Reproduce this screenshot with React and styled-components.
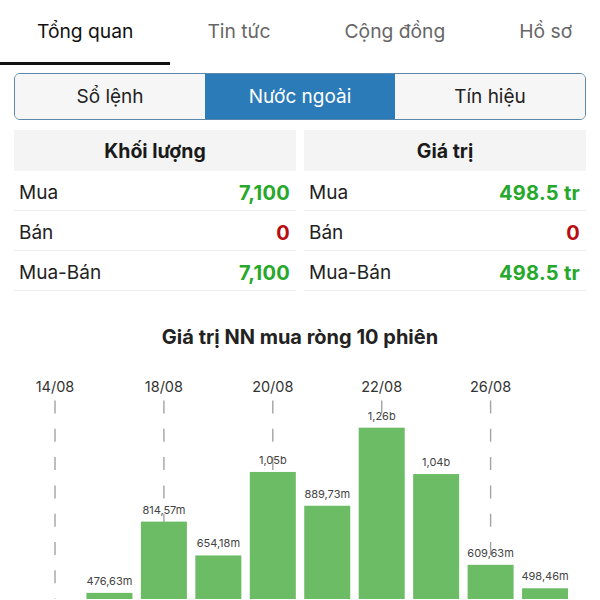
import React from 'react';
import styled, { createGlobalStyle } from 'styled-components';

const GlobalStyle = createGlobalStyle`
  html, body {
    margin: 0;
    padding: 0;
    background: #fff;
    overflow: hidden;
  }
  body {
    font-family: Inter, "Noto Sans", "Liberation Sans", sans-serif;
    color: #222;
  }
`;

const Page = styled.div`
  width: 600px;
  height: 600px;
  overflow: hidden;
`;

const TabBar = styled.div`
  display: flex;
  white-space: nowrap;
  overflow: hidden;
`;

const Tab = styled.div`
  flex: none;
  height: 62px;
  padding: 0 37px;
  display: flex;
  align-items: center;
  font-size: 19.25px;
  color: ${p => (p.$active ? '#111' : '#666')};
  border-bottom: 3px solid ${p => (p.$active ? '#111' : 'transparent')};
`;

const Content = styled.div`
  padding: 8px 14px 0;
`;

const Segmented = styled.div`
  display: grid;
  grid-template-columns: repeat(3, 1fr);
  height: 47px;
  box-sizing: border-box;
  border: 1px solid #5a87ab;
  border-radius: 6px;
  overflow: hidden;
`;

const Segment = styled.div`
  display: flex;
  align-items: center;
  justify-content: center;
  font-size: 19px;
  background: ${p => (p.$active ? '#2b7bb9' : '#f6f6f6')};
  color: ${p => (p.$active ? '#fff' : '#222')};
`;

const Tables = styled.div`
  display: grid;
  grid-template-columns: 1fr 1fr;
  gap: 8px;
  margin-top: 10px;
`;

const Table = styled.div`
  display: flex;
  flex-direction: column;
`;

const Header = styled.div`
  height: 41px;
  display: flex;
  align-items: center;
  justify-content: center;
  background: #f4f4f4;
  font-size: 19.5px;
  font-weight: 700;
  color: #1a1a1a;
`;

const Row = styled.div`
  height: 40px;
  box-sizing: border-box;
  display: flex;
  align-items: center;
  justify-content: space-between;
  padding: 4px 6px 0 5px;
  border-bottom: 1px solid #eeeeee;
  font-size: 19px;
`;

const Label = styled.span`
  color: #222;
`;

const Value = styled.span`
  font-size: 20px;
  letter-spacing: 0.3px;
  font-weight: 700;
  color: ${p => (p.$tone === 'down' ? '#b80c12' : '#26a82a')};
`;

const ChartTitle = styled.div`
  margin-top: 34px;
  text-align: center;
  font-size: 20px;
  line-height: 24px;
  font-weight: 700;
  color: #222;
`;

const Chart = styled.svg`
  display: block;
  width: 600px;
  height: 250px;
  overflow: hidden;
`;

const tabs = ['Tổng quan', 'Tin tức', 'Cộng đồng', 'Hồ sơ'];
const segments = ['Sổ lệnh', 'Nước ngoài', 'Tín hiệu'];

const tables = [
  {
    title: 'Khối lượng',
    rows: [
      ['Mua', '7,100', 'up'],
      ['Bán', '0', 'down'],
      ['Mua-Bán', '7,100', 'up'],
    ],
  },
  {
    title: 'Giá trị',
    rows: [
      ['Mua', '498.5 tr', 'up'],
      ['Bán', '0', 'down'],
      ['Mua-Bán', '498.5 tr', 'up'],
    ],
  },
];

const sessions = [
  { date: '14/08', v: 0.18, label: '180,20m' },
  { date: '15/08', v: 0.47663, label: '476,63m' },
  { date: '18/08', v: 0.81457, label: '814,57m' },
  { date: '19/08', v: 0.65418, label: '654,18m' },
  { date: '20/08', v: 1.05, label: '1,05b' },
  { date: '21/08', v: 0.88973, label: '889,73m' },
  { date: '22/08', v: 1.26, label: '1,26b' },
  { date: '25/08', v: 1.04, label: '1,04b' },
  { date: '26/08', v: 0.60963, label: '609,63m' },
  { date: '27/08', v: 0.49846, label: '498,46m' },
];

// chart sits at page y = 350, numbers below are in svg space
const BASE = 344.4;
const SCALE = 210.9;
const BAR_W = 46;
const cx = i => 55 + 54.45 * i;

const BarChart = () => (
  <Chart viewBox="0 0 600 250">
    {sessions.map((s, i) =>
      i % 2 === 0 ? (
        <g key={'t' + i}>
          <text x={cx(i)} y={43} textAnchor="middle" fontSize="14.5" fill="#333"
            fontFamily="Inter, 'Noto Sans', sans-serif">{s.date}</text>
          <line x1={cx(i)} x2={cx(i)} y1={51.5} y2={260} stroke="#a3a3a3"
            strokeWidth="1.4" strokeDasharray="13 15.3" />
        </g>
      ) : null
    )}
    {sessions.map((s, i) => {
      const top = BASE - s.v * SCALE;
      return (
        <g key={'b' + i}>
          <rect x={cx(i) - BAR_W / 2} y={top} width={BAR_W} height={260 - top} fill="#6cbb65" />
          {top - 8 < 250 && (
            <text x={cx(i)} y={top - 8} textAnchor="middle" fontSize="11" fill="#444"
              fontFamily="Inter, 'Noto Sans', sans-serif">{s.label}</text>
          )}
        </g>
      );
    })}
  </Chart>
);

const App = () => {
  return (
    <Page>
      <GlobalStyle />
      <TabBar>
        {tabs.map((t, i) => (
          <Tab key={t} $active={i === 0}>{t}</Tab>
        ))}
      </TabBar>
      <Content>
        <Segmented>
          {segments.map((s, i) => (
            <Segment key={s} $active={i === 1}>{s}</Segment>
          ))}
        </Segmented>
        <Tables>
          {tables.map(tb => (
            <Table key={tb.title}>
              <Header>{tb.title}</Header>
              {tb.rows.map(([l, v, tone]) => (
                <Row key={l}>
                  <Label>{l}</Label>
                  <Value $tone={tone}>{v}</Value>
                </Row>
              ))}
            </Table>
          ))}
        </Tables>
      </Content>
      <ChartTitle>Giá trị NN mua ròng 10 phiên</ChartTitle>
      <BarChart />
    </Page>
  );
};

export default App;
